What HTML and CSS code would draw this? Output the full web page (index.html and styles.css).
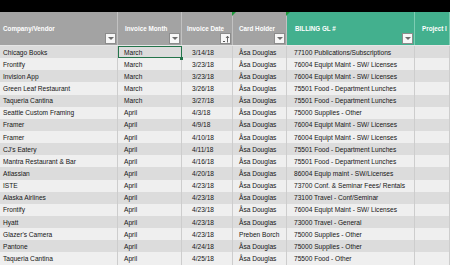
FILE: index.html
```html
<!DOCTYPE html>
<html>
<head>
<meta charset="utf-8">
<link rel="stylesheet" href="styles.css">
</head>
<body>
<div class="topbar"></div>
<div class="sheet">
  <div class="row head">
    <div class="hc"><span class="hl">Company/Vendor</span><span class="fb"><i class="tri"></i></span></div>
    <div class="hc c2"><span class="hl">Invoice Month</span><span class="fb"><i class="tri"></i></span></div>
    <div class="hc c3"><span class="hl">Invoice Date</span><span class="fb sort"><svg width="8" height="8" viewBox="0 0 8 8"><path d="M1 6.5h2" stroke="#555" stroke-width="1"/><path d="M5.5 7.5V1.5M4 3l1.5-1.8L7 3" stroke="#555" stroke-width="0.9" fill="none"/></svg></span></div>
    <div class="hc c4"><i class="note"></i><span class="hl">Card Holder</span><span class="fb"><i class="tri"></i></span></div>
    <div class="hc c5 teal"><i class="note"></i><span class="hl">BILLING GL #</span><span class="fb"><i class="tri"></i></span></div>
    <div class="hc c6 teal"><span class="hl">Project I</span></div>
  </div>
  <div class="row"><div>Chicago Books</div><div class="c2 sel">March<i class="handle"></i></div><div class="c3">3/14/18</div><div class="c4">Åsa Douglas</div><div class="c5">77100 Publications/Subscriptions</div><div></div></div>
  <div class="row"><div>Frontify</div><div class="c2">March</div><div class="c3">3/23/18</div><div class="c4">Åsa Douglas</div><div class="c5">76004 Equipt Maint - SW/ Licenses</div><div></div></div>
  <div class="row"><div>Invision App</div><div class="c2">March</div><div class="c3">3/23/18</div><div class="c4">Åsa Douglas</div><div class="c5">76004 Equipt Maint - SW/ Licenses</div><div></div></div>
  <div class="row"><div>Green Leaf Restaurant</div><div class="c2">March</div><div class="c3">3/26/18</div><div class="c4">Åsa Douglas</div><div class="c5">75501 Food - Department Lunches</div><div></div></div>
  <div class="row"><div>Taqueria Cantina</div><div class="c2">March</div><div class="c3">3/27/18</div><div class="c4">Åsa Douglas</div><div class="c5">75501 Food - Department Lunches</div><div></div></div>
  <div class="row"><div>Seattle Custom Framing</div><div class="c2">April</div><div class="c3">4/3/18</div><div class="c4">Åsa Douglas</div><div class="c5">75000 Supplies - Other</div><div></div></div>
  <div class="row"><div>Framer</div><div class="c2">April</div><div class="c3">4/9/18</div><div class="c4">Åsa Douglas</div><div class="c5">76004 Equipt Maint - SW/ Licenses</div><div></div></div>
  <div class="row"><div>Framer</div><div class="c2">April</div><div class="c3">4/10/18</div><div class="c4">Åsa Douglas</div><div class="c5">76004 Equipt Maint - SW/ Licenses</div><div></div></div>
  <div class="row"><div>CJ's Eatery</div><div class="c2">April</div><div class="c3">4/11/18</div><div class="c4">Åsa Douglas</div><div class="c5">75501 Food - Department Lunches</div><div></div></div>
  <div class="row"><div>Mantra Restaurant &amp; Bar</div><div class="c2">April</div><div class="c3">4/16/18</div><div class="c4">Åsa Douglas</div><div class="c5">75501 Food - Department Lunches</div><div></div></div>
  <div class="row"><div>Atlassian</div><div class="c2">April</div><div class="c3">4/20/18</div><div class="c4">Åsa Douglas</div><div class="c5">86004 Equip maint - SW/Licenses</div><div></div></div>
  <div class="row"><div>ISTE</div><div class="c2">April</div><div class="c3">4/23/18</div><div class="c4">Åsa Douglas</div><div class="c5">73700 Conf. &amp; Seminar Fees/ Rentals</div><div></div></div>
  <div class="row"><div>Alaska Airlines</div><div class="c2">April</div><div class="c3">4/23/18</div><div class="c4">Åsa Douglas</div><div class="c5">73100 Travel - Conf/Seminar</div><div></div></div>
  <div class="row"><div>Frontify</div><div class="c2">April</div><div class="c3">4/23/18</div><div class="c4">Åsa Douglas</div><div class="c5">76004 Equipt Maint - SW/ Licenses</div><div></div></div>
  <div class="row"><div>Hyatt</div><div class="c2">April</div><div class="c3">4/23/18</div><div class="c4">Åsa Douglas</div><div class="c5">73000 Travel - General</div><div></div></div>
  <div class="row"><div>Glazer's Camera</div><div class="c2">April</div><div class="c3">4/23/18</div><div class="c4">Preben Borch</div><div class="c5">75000 Supplies - Other</div><div></div></div>
  <div class="row"><div>Pantone</div><div class="c2">April</div><div class="c3">4/24/18</div><div class="c4">Åsa Douglas</div><div class="c5">75000 Supplies - Other</div><div></div></div>
  <div class="row"><div>Taqueria Cantina</div><div class="c2">April</div><div class="c3">4/25/18</div><div class="c4">Åsa Douglas</div><div class="c5">75500 Food - Other</div><div></div></div>
</div>
</body>
</html>
```
FILE: styles.css
```css
html, body {
  margin: 0;
  padding: 0;
  width: 450px;
  height: 265px;
  overflow: hidden;
  background: #efefef;
  font-family: "Liberation Sans", Arial, sans-serif;
}
.topbar {
  height: 12px;
  background: #000;
}
.sheet {
  display: flex;
  flex-direction: column;
}
.row {
  display: grid;
  grid-template-columns: 118px 64px 51px 54px 128px 1fr;
  height: 12.15px;
  font-size: 6.6px;
  color: #151515;
  background: #efefef;
}
.row:nth-child(even) {
  background: #dcdcdc;
}
.row > div {
  display: flex;
  align-items: center;
  padding-left: 3px;
  border-right: 1px solid #cdcdcd;
  white-space: nowrap;
  overflow: hidden;
  position: relative;
  box-sizing: border-box;
}
.row > .c2 { padding-left: 6px; }
.row > .c3 { padding-left: 10px; }
.row > .c4 { padding-left: 6px; }
.row > .c5 { padding-left: 7px; }
.row.head {
  height: 33px;
  background: #a3a3a3;
  border-bottom: 1px solid #e6e6e6;
  color: #fff;
}
.row.head > .hc {
  display: flex;
  flex-direction: column;
  align-items: stretch;
  padding: 0;
  border-right: 1px solid #c2c2c2;
  overflow: visible;
}
.row.head > .teal {
  background: #43b08e;
  border-right-color: #7dcdb3;
}
.hl {
  font-weight: bold;
  font-size: 6.3px;
  line-height: 8px;
  margin-top: 13px;
  padding-left: 3px;
}
.c2 .hl { padding-left: 7px; }
.c3 .hl { padding-left: 5px; }
.c4 .hl { padding-left: 6px; }
.c5 .hl { padding-left: 8px; }
.c6 .hl { padding-left: 7px; }
.fb {
  align-self: flex-end;
  margin-top: auto;
  margin-bottom: 1px;
  margin-right: 1px;
  width: 9px;
  height: 9px;
  background: #f7f7f7;
  border: 1px solid #8c8c8c;
  display: flex;
  align-items: center;
  justify-content: center;
}
.tri {
  width: 0;
  height: 0;
  border-left: 3px solid transparent;
  border-right: 3px solid transparent;
  border-top: 3px solid #6d6d6d;
}
.note {
  position: absolute;
  left: -1px;
  top: 0;
  width: 0;
  height: 0;
  border-top: 4px solid #1f9a3c;
  border-right: 4px solid transparent;
}
.sel {
  outline: 1px solid #23744a;
  outline-offset: -1px;
  overflow: visible !important;
}
.handle {
  position: absolute;
  right: -2px;
  bottom: -2px;
  width: 3px;
  height: 3px;
  background: #23744a;
  z-index: 2;
}
```
